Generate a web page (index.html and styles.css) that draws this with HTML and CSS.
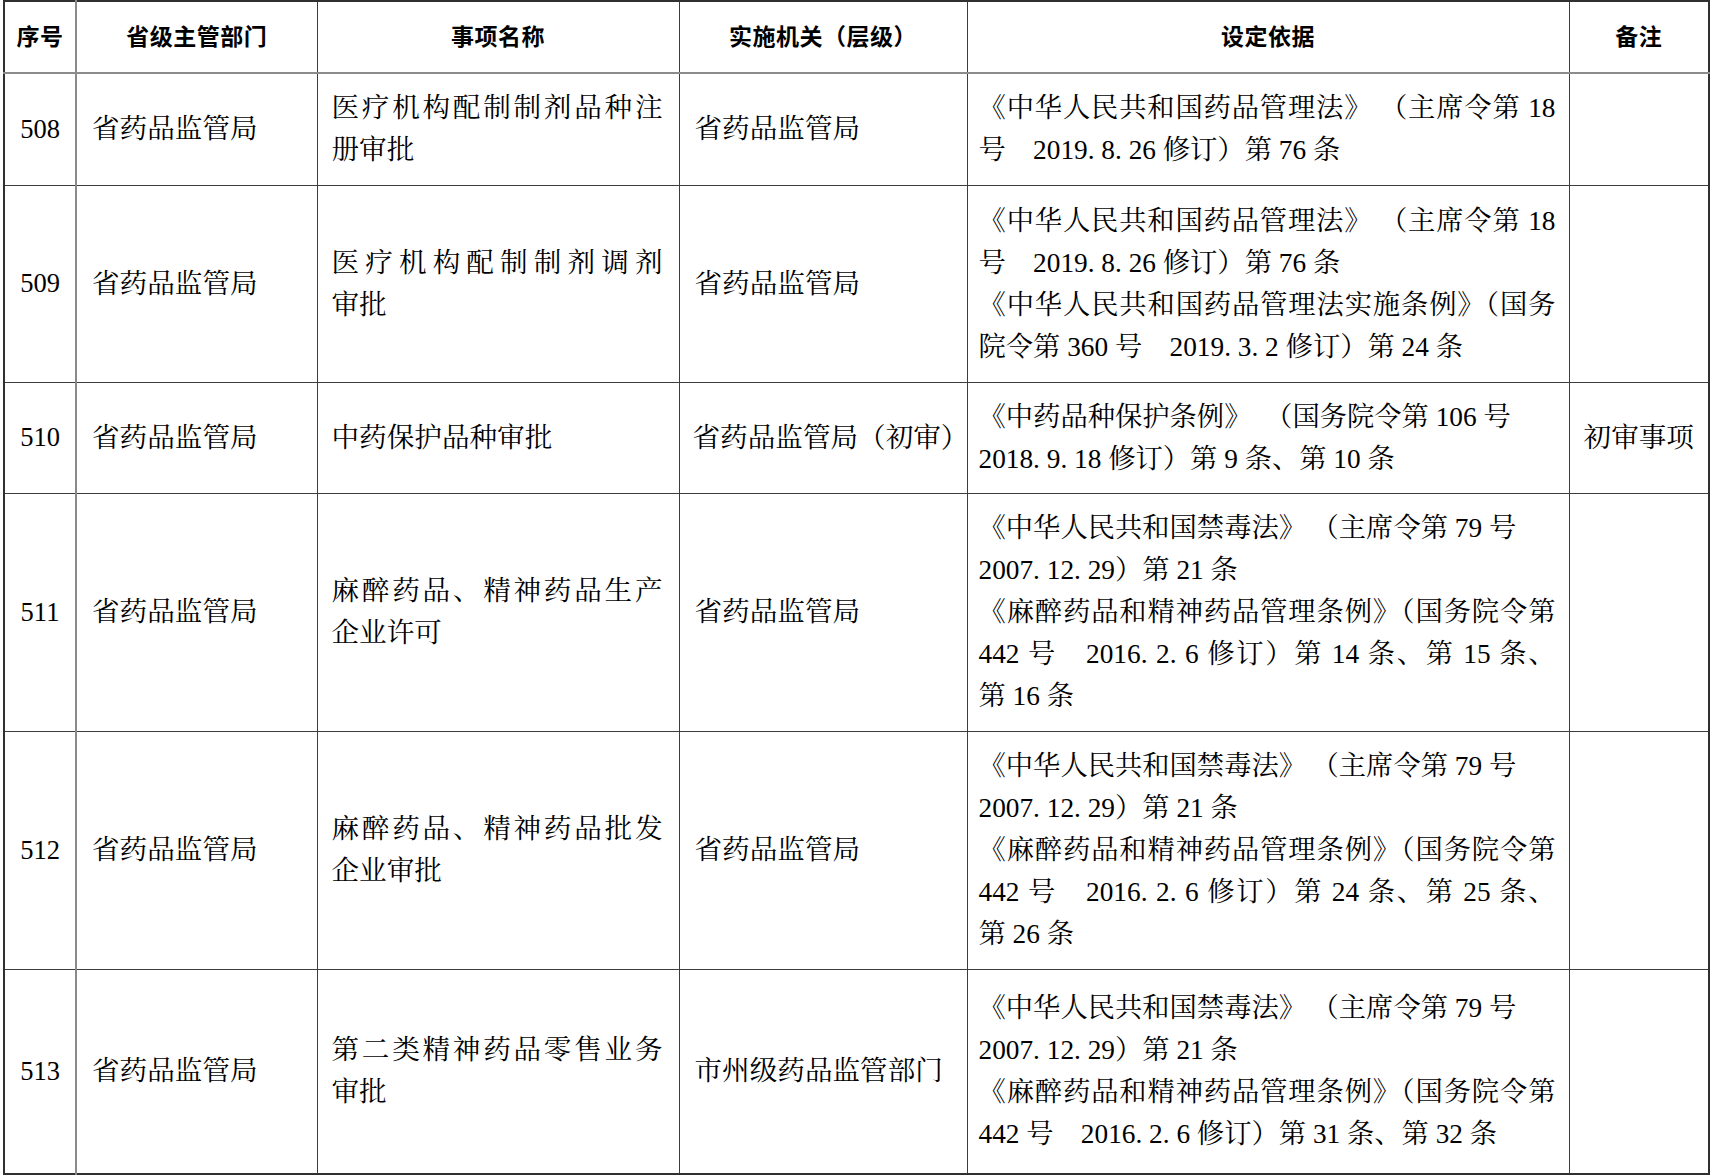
FILE: index.html
```html
<!DOCTYPE html>
<html lang="zh-CN">
<head>
<meta charset="utf-8">
<title>行政许可事项</title>
<link rel="stylesheet" href="styles.css">
</head>
<body>
<table class="grid">
  <colgroup>
    <col class="w1"><col class="w2"><col class="w3"><col class="w4"><col class="w5"><col class="w6">
  </colgroup>
  <thead>
    <tr class="hrow">
      <th class="c1">序号</th>
      <th>省级主管部门</th>
      <th>事项名称</th>
      <th>实施机关（层级）</th>
      <th>设定依据</th>
      <th>备注</th>
    </tr>
  </thead>
  <tbody>
    <tr class="r508">
      <td class="c1 num">508</td>
      <td class="txt">省药品监管局</td>
      <td class="txt name"><span class="ln j">医疗机构配制制剂品种注</span><span class="ln">册审批</span></td>
      <td class="txt">省药品监管局</td>
      <td class="txt basis"><span class="ln j">《中华人民共和国药品管理法》 （主席令第 18</span><span class="ln">号　2019. 8. 26 修订）第 76 条</span></td>
      <td class="txt note"></td>
    </tr>
    <tr class="r509">
      <td class="c1 num">509</td>
      <td class="txt">省药品监管局</td>
      <td class="txt name"><span class="ln j">医疗机构配制制剂调剂</span><span class="ln">审批</span></td>
      <td class="txt">省药品监管局</td>
      <td class="txt basis"><span class="ln j">《中华人民共和国药品管理法》 （主席令第 18</span><span class="ln">号　2019. 8. 26 修订）第 76 条</span><span class="ln j">《中华人民共和国药品管理法实施条例》（国务</span><span class="ln">院令第 360 号　2019. 3. 2 修订）第 24 条</span></td>
      <td class="txt note"></td>
    </tr>
    <tr class="r510">
      <td class="c1 num">510</td>
      <td class="txt">省药品监管局</td>
      <td class="txt name"><span class="ln">中药保护品种审批</span></td>
      <td class="txt nowrap">省药品监管局（初审）</td>
      <td class="txt basis"><span class="ln">《中药品种保护条例》&#8194;（国务院令第 106 号</span><span class="ln">2018. 9. 18 修订）第 9 条、第 10 条</span></td>
      <td class="txt note">初审事项</td>
    </tr>
    <tr class="r511">
      <td class="c1 num">511</td>
      <td class="txt">省药品监管局</td>
      <td class="txt name"><span class="ln j">麻醉药品、精神药品生产</span><span class="ln">企业许可</span></td>
      <td class="txt">省药品监管局</td>
      <td class="txt basis"><span class="ln">《中华人民共和国禁毒法》&#8201;（主席令第 79 号</span><span class="ln">2007. 12. 29）第 21 条</span><span class="ln j">《麻醉药品和精神药品管理条例》（国务院令第</span><span class="ln j">442 号　2016. 2. 6 修订）第 14 条、第 15 条、</span><span class="ln">第 16 条</span></td>
      <td class="txt note"></td>
    </tr>
    <tr class="r512">
      <td class="c1 num">512</td>
      <td class="txt">省药品监管局</td>
      <td class="txt name"><span class="ln j">麻醉药品、精神药品批发</span><span class="ln">企业审批</span></td>
      <td class="txt">省药品监管局</td>
      <td class="txt basis"><span class="ln">《中华人民共和国禁毒法》&#8201;（主席令第 79 号</span><span class="ln">2007. 12. 29）第 21 条</span><span class="ln j">《麻醉药品和精神药品管理条例》（国务院令第</span><span class="ln j">442 号　2016. 2. 6 修订）第 24 条、第 25 条、</span><span class="ln">第 26 条</span></td>
      <td class="txt note"></td>
    </tr>
    <tr class="r513">
      <td class="c1 num">513</td>
      <td class="txt">省药品监管局</td>
      <td class="txt name"><span class="ln j">第二类精神药品零售业务</span><span class="ln">审批</span></td>
      <td class="txt">市州级药品监管部门</td>
      <td class="txt basis"><span class="ln">《中华人民共和国禁毒法》&#8201;（主席令第 79 号</span><span class="ln">2007. 12. 29）第 21 条</span><span class="ln j">《麻醉药品和精神药品管理条例》（国务院令第</span><span class="ln">442 号　2016. 2. 6 修订）第 31 条、第 32 条</span></td>
      <td class="txt note"></td>
    </tr>
  </tbody>
</table>
</body>
</html>
```
FILE: styles.css
```css
html, body {
  margin: 0;
  padding: 0;
  background: #ffffff;
}

body {
  color: #000000;
  font-family: "Liberation Serif", "Noto Serif CJK SC", "Noto Sans CJK SC", serif;
}

.grid {
  margin-left: 3px;
  border-collapse: collapse;
  table-layout: fixed;
  width: 1705px;
  border: 2px solid #303030;
}

.w1 { width: 72px; }
.w2 { width: 241px; }
.w3 { width: 362px; }
.w4 { width: 288px; }
.w5 { width: 602px; }
.w6 { width: 140px; }

.grid th,
.grid td {
  border: 1px solid #3c3c3c;
  padding: 0;
  vertical-align: middle;
}

.hrow { height: 72px; }

.grid th {
  font-family: "Noto Sans CJK SC", sans-serif;
  font-weight: 700;
  font-size: 23px;
  line-height: 30px;
  text-align: center;
  padding: 0 0 5px 0;
  border-bottom: 2px solid #8c8c8c;
  letter-spacing: 0.5px;
}

.grid .c1 {
  border-right: 2px solid #8a8a8a;
}

.grid td.num {
  text-align: center;
  font-size: 26.5px;
}

.grid td.txt {
  font-size: 27.6px;
  line-height: 42px;
  padding: 0 14px 0 15px;
  text-align: left;
}

.grid td.name {
  padding: 0 16px 0 14px;
}

.grid td.basis {
  font-size: 27.3px;
  padding: 0 13px 0 11px;
}

.grid td.note {
  text-align: center;
  padding: 0 4px;
}

.grid td.nowrap {
  white-space: nowrap;
  padding: 0 0 0 13px;
}

.ln {
  display: block;
}

.j {
  text-align: justify;
  text-align-last: justify;
}

.r508 { height: 112px; }
.r509 { height: 197px; }
.r510 { height: 111px; }
.r511 { height: 238px; }
.r512 { height: 238px; }
.r513 { height: 205px; }
```
